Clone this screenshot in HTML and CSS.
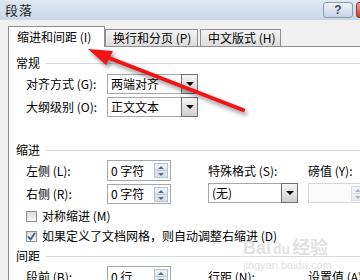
FILE: index.html
```html
<!DOCTYPE html>
<html>
	<head>
		<meta charset="utf-8" />
		<title>段落</title>
		<link rel="stylesheet" href="styles.css">
	</head>
	<body>
		<div class="titlebar">
			<span class="title">段落</span>
			<span class="help">?</span>
			<span class="close"></span>
		</div>
		<div class="tabs">
			<span class="tab active">缩进和间距 (I)</span>
			<span class="tab">换行和分页 (P)</span>
			<span class="tab third">中文版式 (H)</span>
		</div>
		<div class="panel">
			<!--常规-->
			<div class="group first">常规</div>
			<div class="row">
				<span class="label">对齐方式 (G):</span>
				<div class="select">两端对齐<b class="drop"></b></div>
			</div>
			<div class="row second">
				<span class="label">大纲级别 (O):</span>
				<div class="select">正文文本<b class="drop"></b></div>
			</div>
			<!--缩进-->
			<div class="group indent">缩进</div>
			<div class="row tall">
				<span class="label">左侧 (L):</span>
				<div class="spin">0 字符<b class="arrows"><i class="up"></i><i class="down"></i></b></div>
				<span class="label special">特殊格式 (S):</span>
				<span class="label">磅值 (Y):</span>
			</div>
			<div class="row second">
				<span class="label">右侧 (R):</span>
				<div class="spin">0 字符<b class="arrows"><i class="up"></i><i class="down"></i></b></div>
				<div class="select small">(无)<b class="drop"></b></div>
				<div class="input disabled"><b class="arrows"><i class="up"></i><i class="down"></i></b></div>
			</div>
			<div class="check">
				<span class="box"></span>对称缩进 (M)
			</div>
			<div class="check checked">
				<span class="box"><svg width="9" height="9" viewBox="0 0 9 9"><path d="M1 4.5 L3.5 7.5 L8 1" fill="none" stroke="#3f5a96" stroke-width="1.8"/></svg></span>如果定义了文档网格，则自动调整右缩进 (D)
			</div>
			<!--间距-->
			<div class="group spacing">间距</div>
			<div class="row tall">
				<span class="label">段前 (B):</span>
				<div class="spin">0 行<b class="arrows"><i class="up"></i><i class="down"></i></b></div>
				<span class="label special">行距 (N):</span>
				<span class="label">设置值 (A):</span>
			</div>
		</div>
		<div class="watermark">
			<p class="brand">Bai<span class="paw">du</span>经验</p>
			<p class="site">jingyan.baidu.com</p>
		</div>
		<svg class="arrow" width="360" height="280" viewBox="0 0 360 280">
			<line x1="243" y1="110" x2="104" y2="56" stroke="#f01414" stroke-width="4" stroke-linecap="round"/>
			<polygon points="88,49 113,51 106,65" fill="#f01414"/>
		</svg>
	</body>
</html>
```
FILE: styles.css
```css
*{
	margin: 0;
	padding: 0;
	box-sizing: border-box;
}
body{
	width: 360px;
	height: 280px;
	overflow: hidden;
	position: relative;
	background-color: #f0f0f0;
	font: 12px/14px "Noto Sans CJK SC", "Liberation Sans", sans-serif;
	color: #000;
}
/*标题栏*/
.titlebar{
	width: 390px;
	height: 20px;
	display: flex;
	align-items: center;
	padding-left: 5px;
	background: linear-gradient(#dfe8f3, #c8d7e8);
}
.titlebar .title{
	font-size: 13px;
	letter-spacing: 1px;
	margin-right: auto;
	color: #1e1e1e;
}
.titlebar .help{
	width: 30px;
	height: 16px;
	border: 1px solid #8a9ab0;
	border-radius: 3px;
	background: linear-gradient(#f0f4f9, #c5d2e2);
	text-align: center;
	font: bold 12px/14px "Liberation Sans", sans-serif;
	color: #3a4c66;
}
.titlebar .close{
	width: 34px;
	height: 16px;
	margin-left: 3px;
	border: 1px solid #8c3a2c;
	border-radius: 3px;
	background: linear-gradient(#e8a595, #c4432e);
}
/*标签页*/
.tabs{
	height: 26px;
	display: flex;
	align-items: flex-end;
	padding-left: 8px;
}
.tab{
	width: 93px;
	height: 17px;
	padding-left: 7px;
	line-height: 16px;
	border: 1px solid #8d8f93;
	border-bottom: 0;
	background: linear-gradient(#f4f4f4, #dcdcdc);
	white-space: nowrap;
}
.tab.active{
	width: 97px;
	height: 21px;
	padding-left: 8px;
	line-height: 20px;
	margin-bottom: -1px;
	background: #fff;
	position: relative;
	z-index: 1;
}
.tab.third{
	width: 81px;
	margin-left: 2px;
}
.panel{
	width: 400px;
	height: 260px;
	margin-left: 8px;
	padding-left: 7px;
	border: 1px solid #8d8f93;
	background-color: #fff;
}
/*分组标题*/
.group{
	display: flex;
	align-items: center;
	height: 14px;
}
.group:after{
	content: "";
	flex: 1;
	height: 1px;
	margin-left: 6px;
	background-color: #d5dde3;
}
.group.first{
	margin-top: 9px;
}
.group.indent{
	margin-top: 26px;
}
.group.spacing{
	margin-top: 5px;
}
/*行*/
.row{
	display: flex;
	align-items: center;
	height: 20px;
	padding-left: 10px;
	margin-top: 4px;
}
.row.second{
	margin-top: 3px;
}
.row.tall{
	height: 21px;
	margin-top: 3px;
}
.label{
	width: 81px;
	white-space: nowrap;
}
.label.special{
	width: 100px;
	margin-left: 37px;
}
.select{
	width: 91px;
	height: 20px;
	display: flex;
	align-items: center;
	padding-left: 3px;
	border: 1px solid #a5a7ab;
	background-color: #fff;
}
.select.small{
	width: 90px;
	margin-left: 37px;
	margin-top: -2px;
}
.select .drop{
	width: 17px;
	height: 20px;
	margin: -1px -1px -1px auto;
	border: 1px solid #6f7175;
	background: linear-gradient(#f6f6f6, #cfcfcf);
	position: relative;
}
.select .drop:after{
	content: "";
	position: absolute;
	left: 4px;
	top: 7px;
	border-left: 4px solid transparent;
	border-right: 4px solid transparent;
	border-top: 4px solid #000;
}
.spin{
	width: 64px;
	height: 100%;
	display: flex;
	align-items: center;
	padding-left: 3px;
	border: 1px solid #a5a7ab;
	background-color: #fff;
	white-space: nowrap;
}
.arrows{
	width: 14px;
	height: 15px;
	margin-left: auto;
	margin-right: 2px;
	display: flex;
	flex-direction: column;
	border: 1px solid #b9c3ce;
	background: linear-gradient(#eef2f6, #d6dee7);
}
.arrows i{
	flex: 1;
	position: relative;
}
.arrows .up{
	border-bottom: 1px solid #b9c3ce;
}
.arrows i:after{
	content: "";
	position: absolute;
	left: 3px;
	top: 2px;
	border-left: 3px solid transparent;
	border-right: 3px solid transparent;
}
.arrows .up:after{
	border-bottom: 3px solid #5b6d82;
}
.arrows .down:after{
	border-top: 3px solid #5b6d82;
}
.input.disabled{
	width: 60px;
	height: 20px;
	margin-left: 10px;
	margin-top: -2px;
	display: flex;
	align-items: center;
	border: 1px solid #d4d6d9;
	background-color: #fbfbfb;
}
.input.disabled .arrows{
	margin-left: 42px;
	opacity: .5;
}
/*复选框*/
.check{
	display: flex;
	align-items: center;
	height: 16px;
	padding-left: 10px;
	margin-top: 4px;
	white-space: nowrap;
}
.check .box{
	width: 11px;
	height: 11px;
	margin-right: 5px;
	display: flex;
	align-items: center;
	justify-content: center;
	border: 1px solid #8e8f8f;
	background: linear-gradient(#dcdcdc, #f6f6f6);
}
/*水印*/
.watermark{
	position: absolute;
	left: 243px;
	top: 238px;
	color: #e2e2e2;
	font-family: "Liberation Sans", "Noto Sans CJK SC", sans-serif;
}
.watermark .brand{
	font: bold 18px/20px "Liberation Sans", "Noto Sans CJK SC", sans-serif;
}
.watermark .paw{
	font-size: 14px;
	margin: 0 2px;
}
.watermark .site{
	font-size: 11px;
	line-height: 12px;
}
.arrow{
	position: absolute;
	left: 0;
	top: 0;
	z-index: 2;
	filter: drop-shadow(2px 3px 2px rgba(0, 0, 0, .45));
}
```
